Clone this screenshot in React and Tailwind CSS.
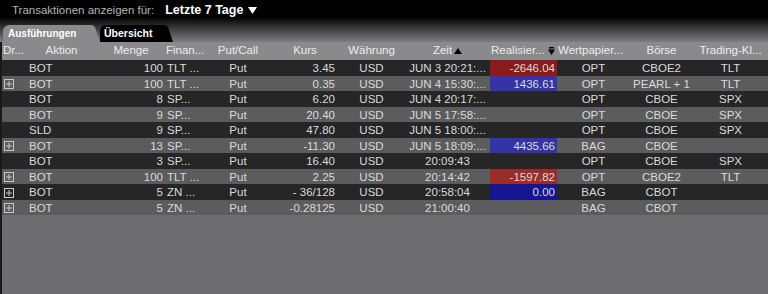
const rows = [
  { icon: false, akt: 'BOT', menge: '100', fin: 'TLT ...', kurs: '3.45', zeit: 'JUN 3 20:21:...', real: '-2646.04', tone: 'red', typ: 'OPT', boerse: 'CBOE2', tk: 'TLT' },
  { icon: true, akt: 'BOT', menge: '100', fin: 'TLT ...', kurs: '0.35', zeit: 'JUN 4 15:30:...', real: '1436.61', tone: 'blue', typ: 'OPT', boerse: 'PEARL + 1', tk: 'TLT' },
  { icon: false, akt: 'BOT', menge: '8', fin: 'SP...', kurs: '6.20', zeit: 'JUN 4 20:17:...', real: '', tone: '', typ: 'OPT', boerse: 'CBOE', tk: 'SPX' },
  { icon: false, akt: 'BOT', menge: '9', fin: 'SP...', kurs: '20.40', zeit: 'JUN 5 17:58:...', real: '', tone: '', typ: 'OPT', boerse: 'CBOE', tk: 'SPX' },
  { icon: false, akt: 'SLD', menge: '9', fin: 'SP...', kurs: '47.80', zeit: 'JUN 5 18:00:...', real: '', tone: '', typ: 'OPT', boerse: 'CBOE', tk: 'SPX' },
  { icon: true, akt: 'BOT', menge: '13', fin: 'SP...', kurs: '-11.30', zeit: 'JUN 5 18:09:...', real: '4435.66', tone: 'blue', typ: 'BAG', boerse: 'CBOE', tk: '' },
  { icon: false, akt: 'BOT', menge: '3', fin: 'SP...', kurs: '16.40', zeit: '20:09:43', real: '', tone: '', typ: 'OPT', boerse: 'CBOE', tk: 'SPX' },
  { icon: true, akt: 'BOT', menge: '100', fin: 'TLT ...', kurs: '2.25', zeit: '20:14:42', real: '-1597.82', tone: 'red', typ: 'OPT', boerse: 'CBOE2', tk: 'TLT' },
  { icon: true, akt: 'BOT', menge: '5', fin: 'ZN ...', kurs: '- 36/128', zeit: '20:58:04', real: '0.00', tone: 'blue', typ: 'BAG', boerse: 'CBOT', tk: '' },
  { icon: true, akt: 'BOT', menge: '5', fin: 'ZN ...', kurs: '-0.28125', zeit: '21:00:40', real: '', tone: '', typ: 'BAG', boerse: 'CBOT', tk: '' },
]

const cols = 'grid grid-cols-[24px_71px_68px_39px_68px_66px_67px_85px_67px_73px_63px_75px]'

const ExpandIcon = () => (
  <svg width="10" height="10" viewBox="0 0 10 10" className="text-[#c8c8c8]">
    <rect x="0.5" y="0.5" width="9" height="9" fill="none" stroke="currentColor" strokeWidth="1" />
    <line x1="5" y1="2" x2="5" y2="8" stroke="currentColor" strokeWidth="1" />
    <line x1="2" y1="5" x2="8" y2="5" stroke="currentColor" strokeWidth="1" />
  </svg>
)

const toneClass = (tone, light) => {
  if (tone === 'red') return light ? 'bg-[#9a2c2c]' : 'bg-[#8b1a1a]'
  if (tone === 'blue') return light ? 'bg-[#3434a6]' : 'bg-[#161690]'
  return ''
}

export default function App() {
  return (
    <div className="w-[768px] h-[294px] flex flex-col bg-[#6e6e70] overflow-hidden"
      style={{ fontFamily: "'Liberation Sans', Arial, sans-serif" }}>

      {/* top filter + tabs */}
      <div className="h-[42px] flex flex-col bg-[linear-gradient(to_bottom,#000_40%,#7e7e80_100%)]">
        <div className="h-[21px] flex items-center pl-[12px]">
          <span className="text-[11.5px] text-[#b4b4b4]">Transaktionen anzeigen für:</span>
          <span className="ml-[11px] text-[12.5px] font-bold text-white">Letzte 7 Tage</span>
          <svg width="9" height="8" viewBox="0 0 9 8" className="ml-[5px]">
            <polygon points="0,0 9,0 4.5,7" fill="#fff" />
          </svg>
        </div>
        <div className="flex-1 flex items-end pl-[3px]">
          <div className="flex items-end">
            <div className="h-[17px] w-[88px] bg-[#8a8a8c] rounded-tl-[6px] flex items-center pl-[5px]">
              <span className="text-[10px] font-bold text-white">Ausführungen</span>
            </div>
            <svg width="9" height="17" viewBox="0 0 9 17">
              <path d="M0 0 Q4 0 5 5 L9 17 L0 17 Z" fill="#8a8a8c" />
            </svg>
          </div>
          <div className="flex items-end">
            <div className="h-[17px] w-[64px] bg-black rounded-tl-[6px] flex items-center pl-[4px]">
              <span className="text-[10.5px] font-bold text-white">Übersicht</span>
            </div>
            <svg width="9" height="17" viewBox="0 0 9 17">
              <path d="M0 0 Q4 0 5 5 L9 17 L0 17 Z" fill="#000" />
            </svg>
          </div>
        </div>
      </div>

      <div className="flex-1 flex flex-col border-l-2 border-[#1a1a1a]">
        {/* header */}
        <div className={`${cols} h-[18px] items-center bg-[#8a8a8c] text-[11.5px] text-[#ececec]`}>
          <span className="pl-[1px]">Dr...</span>
          <span className="text-center">Aktion</span>
          <span className="text-center">Menge</span>
          <span className="pl-[1px] whitespace-nowrap">Finan...</span>
          <span className="text-center">Put/Call</span>
          <span className="text-center">Kurs</span>
          <span className="text-center">Währung</span>
          <span className="flex items-center justify-center gap-[2px]">
            Zeit
            <svg width="8" height="6" viewBox="0 0 8 6"><polygon points="4,0 8,6 0,6" fill="#000" /></svg>
          </span>
          <span className="flex items-center justify-between pl-[1px] pr-[2px] whitespace-nowrap">
            Realisier...
            <svg width="7" height="8" viewBox="0 0 7 8"><rect x="1" y="0" width="5" height="1.5" fill="#000" /><polygon points="0,2.5 7,2.5 3.5,8" fill="#000" /></svg>
          </span>
          <span className="pl-[1px] whitespace-nowrap">Wertpapier...</span>
          <span className="text-center">Börse</span>
          <span className="text-center whitespace-nowrap">Trading-Kl...</span>
        </div>

        {/* rows */}
        {rows.map((r, i) => {
          const light = i % 2 === 1
          return (
            <div key={i}
              className={`${cols} h-[15.5px] items-stretch text-[11.5px] text-[#dadada] ${light ? 'bg-[#5c5c5e]' : 'bg-[#262626]'}`}>
              <span className="flex items-center pl-[2px]">{r.icon && <ExpandIcon />}</span>
              <span className="flex items-center pl-[3px]">{r.akt}</span>
              <span className="flex items-center justify-end pr-[2px]">{r.menge}</span>
              <span className="flex items-center pl-[2px] whitespace-nowrap">{r.fin}</span>
              <span className="flex items-center justify-center">Put</span>
              <span className="flex items-center justify-end pr-[3px] whitespace-nowrap">{r.kurs}</span>
              <span className="flex items-center justify-center">USD</span>
              <span className="flex items-center justify-center whitespace-nowrap">{r.zeit}</span>
              <span className={`flex items-center justify-end pr-[2px] ${toneClass(r.tone, light)}`}>{r.real}</span>
              <span className="flex items-center justify-center">{r.typ}</span>
              <span className="flex items-center justify-center whitespace-nowrap">{r.boerse}</span>
              <span className="flex items-center justify-center">{r.tk}</span>
            </div>
          )
        })}
      </div>
    </div>
  )
}
